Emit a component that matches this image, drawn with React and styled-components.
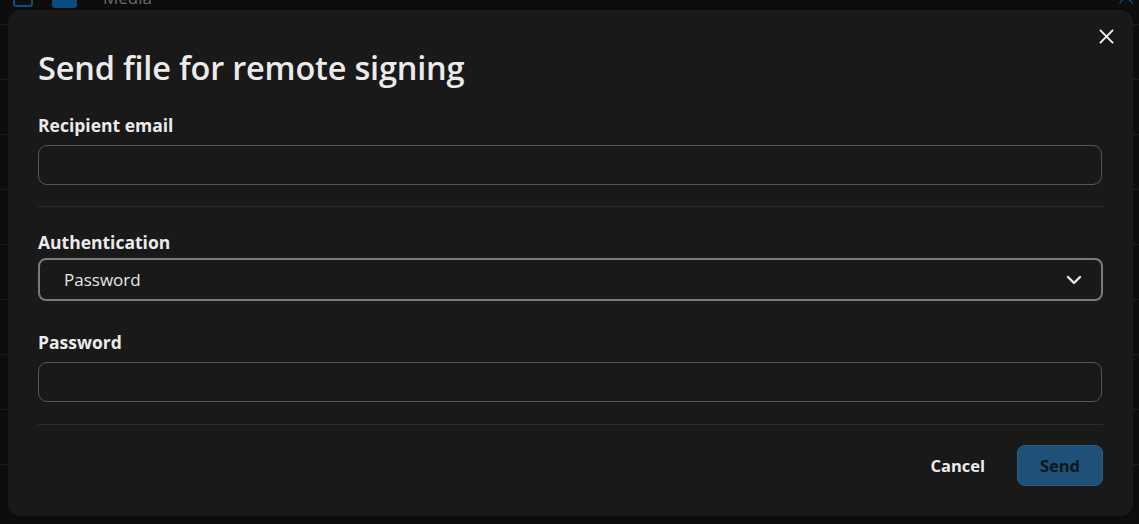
import styled, { createGlobalStyle } from 'styled-components';

const GlobalStyle = createGlobalStyle`
  html, body {
    margin: 0;
    padding: 0;
    background: #0d0d0d;
    font-family: 'Open Sans', 'Noto Sans', 'Liberation Sans', sans-serif;
    overflow: hidden;
  }
  * {
    box-sizing: border-box;
  }
`;

// only the first row's name peeks out above the dialog
const rows = ['Media', '', '', '', '', '', '', '', ''];

const App = () => {
  return (
    <>
      <GlobalStyle />
      <Page>
        <FileList>
          {rows.map((name, i) => (
            <FileRow key={i}>
              <CheckBox />
              <FolderIcon />
              <FileName>{name}</FileName>
              <RowAction>
                <svg width="18" height="18" viewBox="0 0 24 24" fill="none" stroke="currentColor" strokeWidth="2">
                  <circle cx="12" cy="8" r="4" />
                  <path d="M4 21c0-4 4-6 8-6s8 2 8 6" />
                </svg>
              </RowAction>
            </FileRow>
          ))}
        </FileList>
      </Page>
      <Backdrop>
        <Dialog>
          <CloseBtn aria-label="Close">
            <svg width="15" height="15" viewBox="0 0 16 16" fill="none" stroke="#f2f2f2" strokeWidth="2">
              <path d="M1 1 15 15M15 1 1 15" />
            </svg>
          </CloseBtn>
          <Title>Send file for remote signing</Title>
          <Label $top={28}>Recipient email</Label>
          <TextInput $top={9} />
          <Divider $top={21} />
          <Label $top={24}>Authentication</Label>
          <Select $top={5}>
            <span>Password</span>
            <svg width="16" height="10" viewBox="0 0 16 10" fill="none" stroke="#f2f2f2" strokeWidth="2.4" strokeLinecap="round" strokeLinejoin="round">
              <path d="M2 2 8 8 14 2" />
            </svg>
          </Select>
          <Label $top={30}>Password</Label>
          <TextInput $top={9} />
          <Divider $top={22} />
          <Footer>
            <CancelBtn>Cancel</CancelBtn>
            <SendBtn>Send</SendBtn>
          </Footer>
        </Dialog>
      </Backdrop>
    </>
  );
};

// page behind the dialog
const Page = styled.div`
  height: 524px;
  overflow: hidden;
`;
const FileList = styled.div`
  margin-top: -30px;
`;
const FileRow = styled.div`
  height: 55px;
  display: flex;
  align-items: center;
  padding: 0 4px 0 13px;
  border-bottom: 1px solid #1c1c1c;
  color: #6b6b6b;
`;
const CheckBox = styled.div`
  width: 20px;
  height: 20px;
  border: 2px solid #0b4d80;
  border-radius: 3px;
`;
const FolderIcon = styled.div`
  width: 25px;
  height: 22px;
  margin-left: 19px;
  background: #0b4d80;
  border-radius: 3px;
`;
const FileName = styled.div`
  margin-left: 26px;
  font-size: 17px;
  flex: 1;
`;
const RowAction = styled.div`
  color: #0b4d80;
  display: flex;
`;

// dialog
const Backdrop = styled.div`
  position: fixed;
  inset: 0;
  padding: 10px 6px 8px 8px;
  display: flex;
  align-items: flex-start;
`;
const Dialog = styled.div`
  position: relative;
  width: 100%;
  height: 506px;
  background: #191919;
  border-radius: 12px;
  padding: 40px 30px 0 30px;
  display: flex;
  flex-direction: column;
  color: #ebebeb;
`;
const CloseBtn = styled.button`
  position: absolute;
  top: 12px;
  right: 13px;
  width: 28px;
  height: 28px;
  border: 0;
  padding: 0;
  background: none;
  display: flex;
  align-items: center;
  justify-content: center;
`;
const Title = styled.h2`
  margin: 0;
  font-size: 32.5px;
  line-height: 36px;
  font-weight: 600;
  letter-spacing: -0.2px;
`;
const Label = styled.label`
  margin-top: ${(p) => p.$top}px;
  font-size: 17.5px;
  line-height: 22px;
  font-weight: 700;
`;
const TextInput = styled.div`
  margin-top: ${(p) => p.$top}px;
  height: 40px;
  border: 1px solid #575757;
  border-radius: 9px;
  margin-right: 1px;
`;
const Divider = styled.div`
  margin-top: ${(p) => p.$top}px;
  height: 1px;
  background: #2c2c2c;
`;
const Select = styled.div`
  margin-top: ${(p) => p.$top}px;
  height: 43px;
  border: 2px solid #7a7a7a;
  border-radius: 8px;
  display: flex;
  align-items: center;
  justify-content: space-between;
  padding: 0 19px 0 24px;
  font-size: 17px;
  color: #e6e6e6;
`;
const Footer = styled.div`
  margin-top: 20px;
  display: flex;
  justify-content: flex-end;
  align-items: center;
  gap: 32px;
`;
const CancelBtn = styled.button`
  border: 0;
  background: none;
  padding: 0;
  font-family: inherit;
  font-size: 16.5px;
  font-weight: 700;
  color: #ececec;
`;
const SendBtn = styled.button`
  width: 86px;
  height: 41px;
  border: 1px solid #2a5f86;
  border-radius: 8px;
  background: #1f5077;
  font-family: inherit;
  font-size: 16.5px;
  font-weight: 700;
  color: #0c161e;
`;

export default App;
